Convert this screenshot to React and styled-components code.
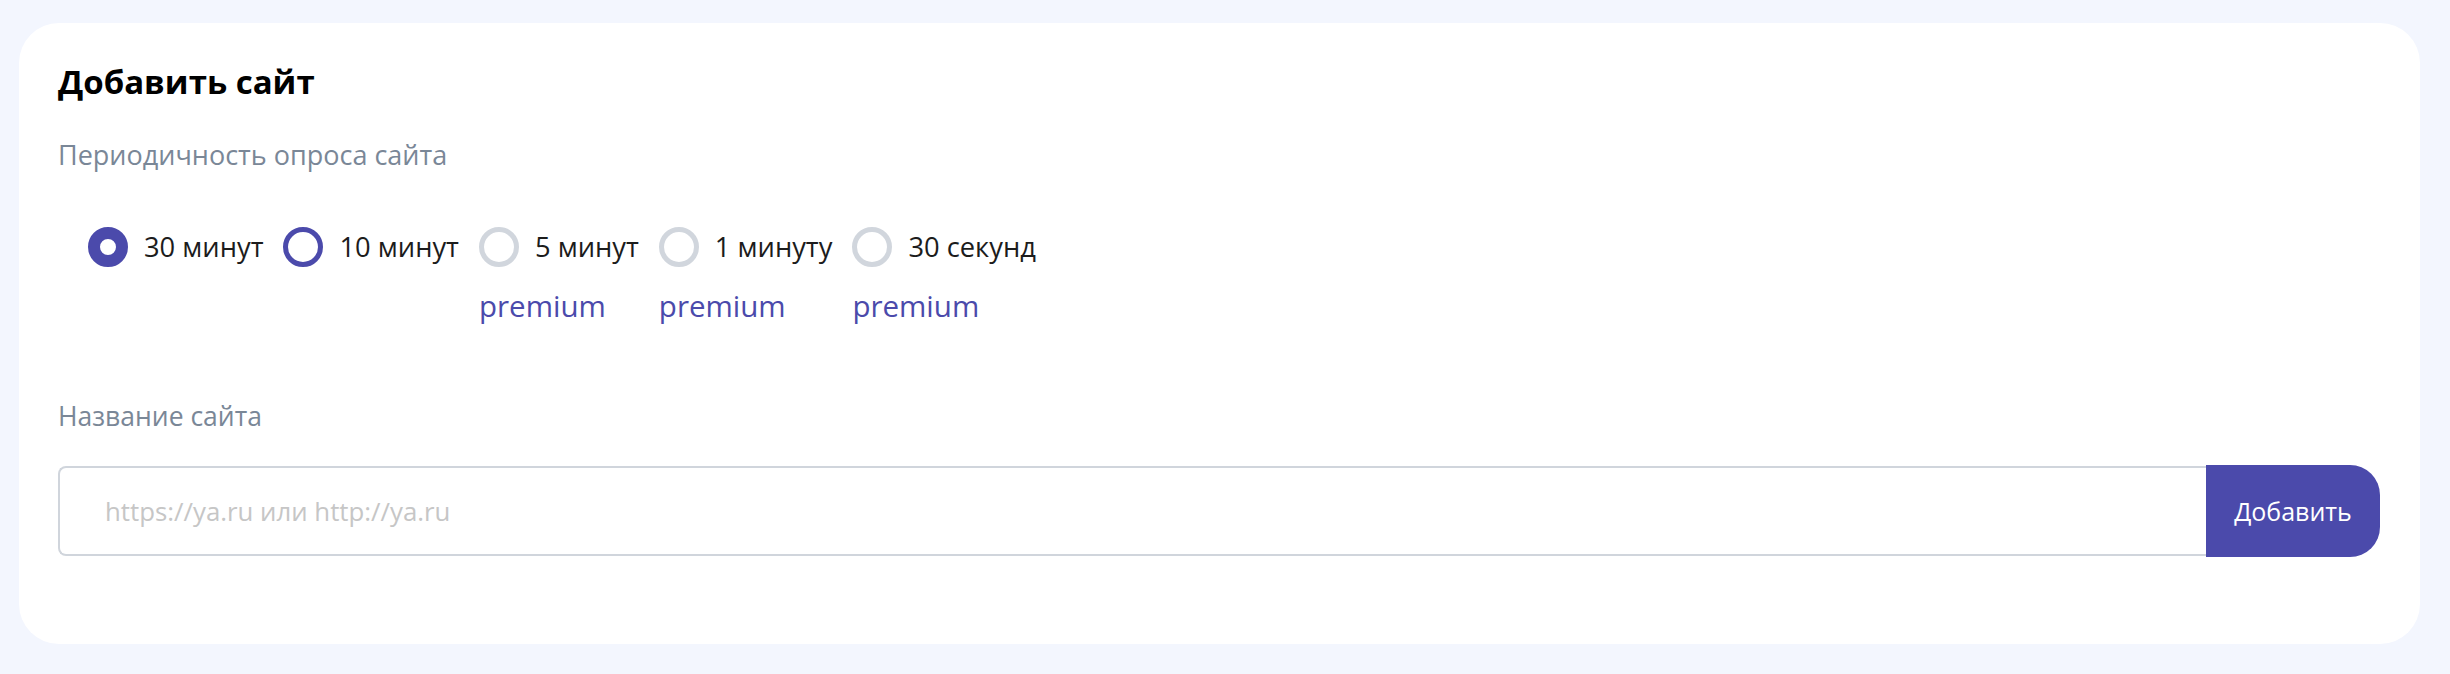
import React, { useState } from "react";
import styled, { createGlobalStyle } from "styled-components";

const GlobalStyle = createGlobalStyle`
  html, body {
    margin: 0;
    padding: 0;
    background: #f3f6fe;
  }
  body {
    font-family: "Open Sans", "Noto Sans", sans-serif;
  }
`;

const Page = styled.div`
  padding: 23px 30px 30px 19px;
`;

const Card = styled.section`
  background: #ffffff;
  border-radius: 40px;
  padding: 41px 40px 88px 39px;
`;

const Title = styled.h2`
  margin: 0;
  font-size: 33px;
  line-height: 36px;
  font-weight: 700;
  color: #000;
`;

const Label = styled.div`
  margin-top: ${p => p.$top}px;
  font-size: ${p => p.$size}px;
  line-height: 30px;
  color: #7a8797;
`;

const RadioGroup = styled.div`
  display: flex;
  gap: 20px;
  margin-top: 57px;
  padding-left: 30px;
`;

const Option = styled.label`
  display: flex;
  flex-direction: column;
  cursor: ${p => (p.$locked ? "default" : "pointer")};
`;

const OptionRow = styled.div`
  display: flex;
  align-items: center;
  gap: 16px;
  height: 40px;
`;

const Circle = styled.span`
  box-sizing: border-box;
  width: 40px;
  height: 40px;
  border-radius: 50%;
  flex: none;
  border: ${p => (p.$checked ? "12px" : "5px")} solid
    ${p => (p.$locked ? "#d1d6dd" : "#4b4aab")};
  background: #fff;
`;

const OptionText = styled.span`
  font-size: 27.3px;
  line-height: 32px;
  color: #1c1c1c;
  white-space: nowrap;
`;

const Premium = styled.span`
  margin-top: 22px;
  font-size: 29.5px;
  line-height: 34px;
  color: #4b4aab;
`;

const InputRow = styled.div`
  display: flex;
  margin-top: 35px;
  height: 90px;
`;

const Input = styled.input`
  flex: 1;
  box-sizing: border-box;
  height: 90px;
  border: 2px solid #d0d5dc;
  border-right: none;
  border-radius: 8px 0 0 8px;
  padding: 0 0 0 45px;
  font-family: "Open Sans", sans-serif;
  font-size: 25.8px;
  color: #222;
  outline: none;
  &::placeholder {
    color: #c6c6c6;
  }
`;

const Button = styled.button`
  width: 174px;
  height: 92px;
  margin-top: -1px;
  border: none;
  border-radius: 0 30px 30px 0;
  background: #4b4aab;
  color: #fff;
  font-family: "Open Sans", sans-serif;
  font-size: 25px;
  cursor: pointer;
`;

const options = [
  { id: "30m", text: "30 минут" },
  { id: "10m", text: "10 минут" },
  { id: "5m", text: "5 минут", premium: true },
  { id: "1m", text: "1 минуту", premium: true },
  { id: "30s", text: "30 секунд", premium: true },
];

export default function App() {
  const [period, setPeriod] = useState("30m");

  return (
    <Page>
      <GlobalStyle />
      <Card>
        <Title>Добавить сайт</Title>
        <Label $top={40} $size={27}>Периодичность опроса сайта</Label>
        <RadioGroup>
          {options.map(o => (
            <Option
              key={o.id}
              $locked={o.premium}
              onClick={() => !o.premium && setPeriod(o.id)}
            >
              <OptionRow>
                <Circle $checked={period === o.id} $locked={o.premium} />
                <OptionText>{o.text}</OptionText>
              </OptionRow>
              {o.premium && <Premium>premium</Premium>}
            </Option>
          ))}
        </RadioGroup>
        <Label $top={78} $size={26.5}>Название сайта</Label>
        <InputRow>
          <Input placeholder="https://ya.ru или http://ya.ru" />
          <Button>Добавить</Button>
        </InputRow>
      </Card>
    </Page>
  );
}
